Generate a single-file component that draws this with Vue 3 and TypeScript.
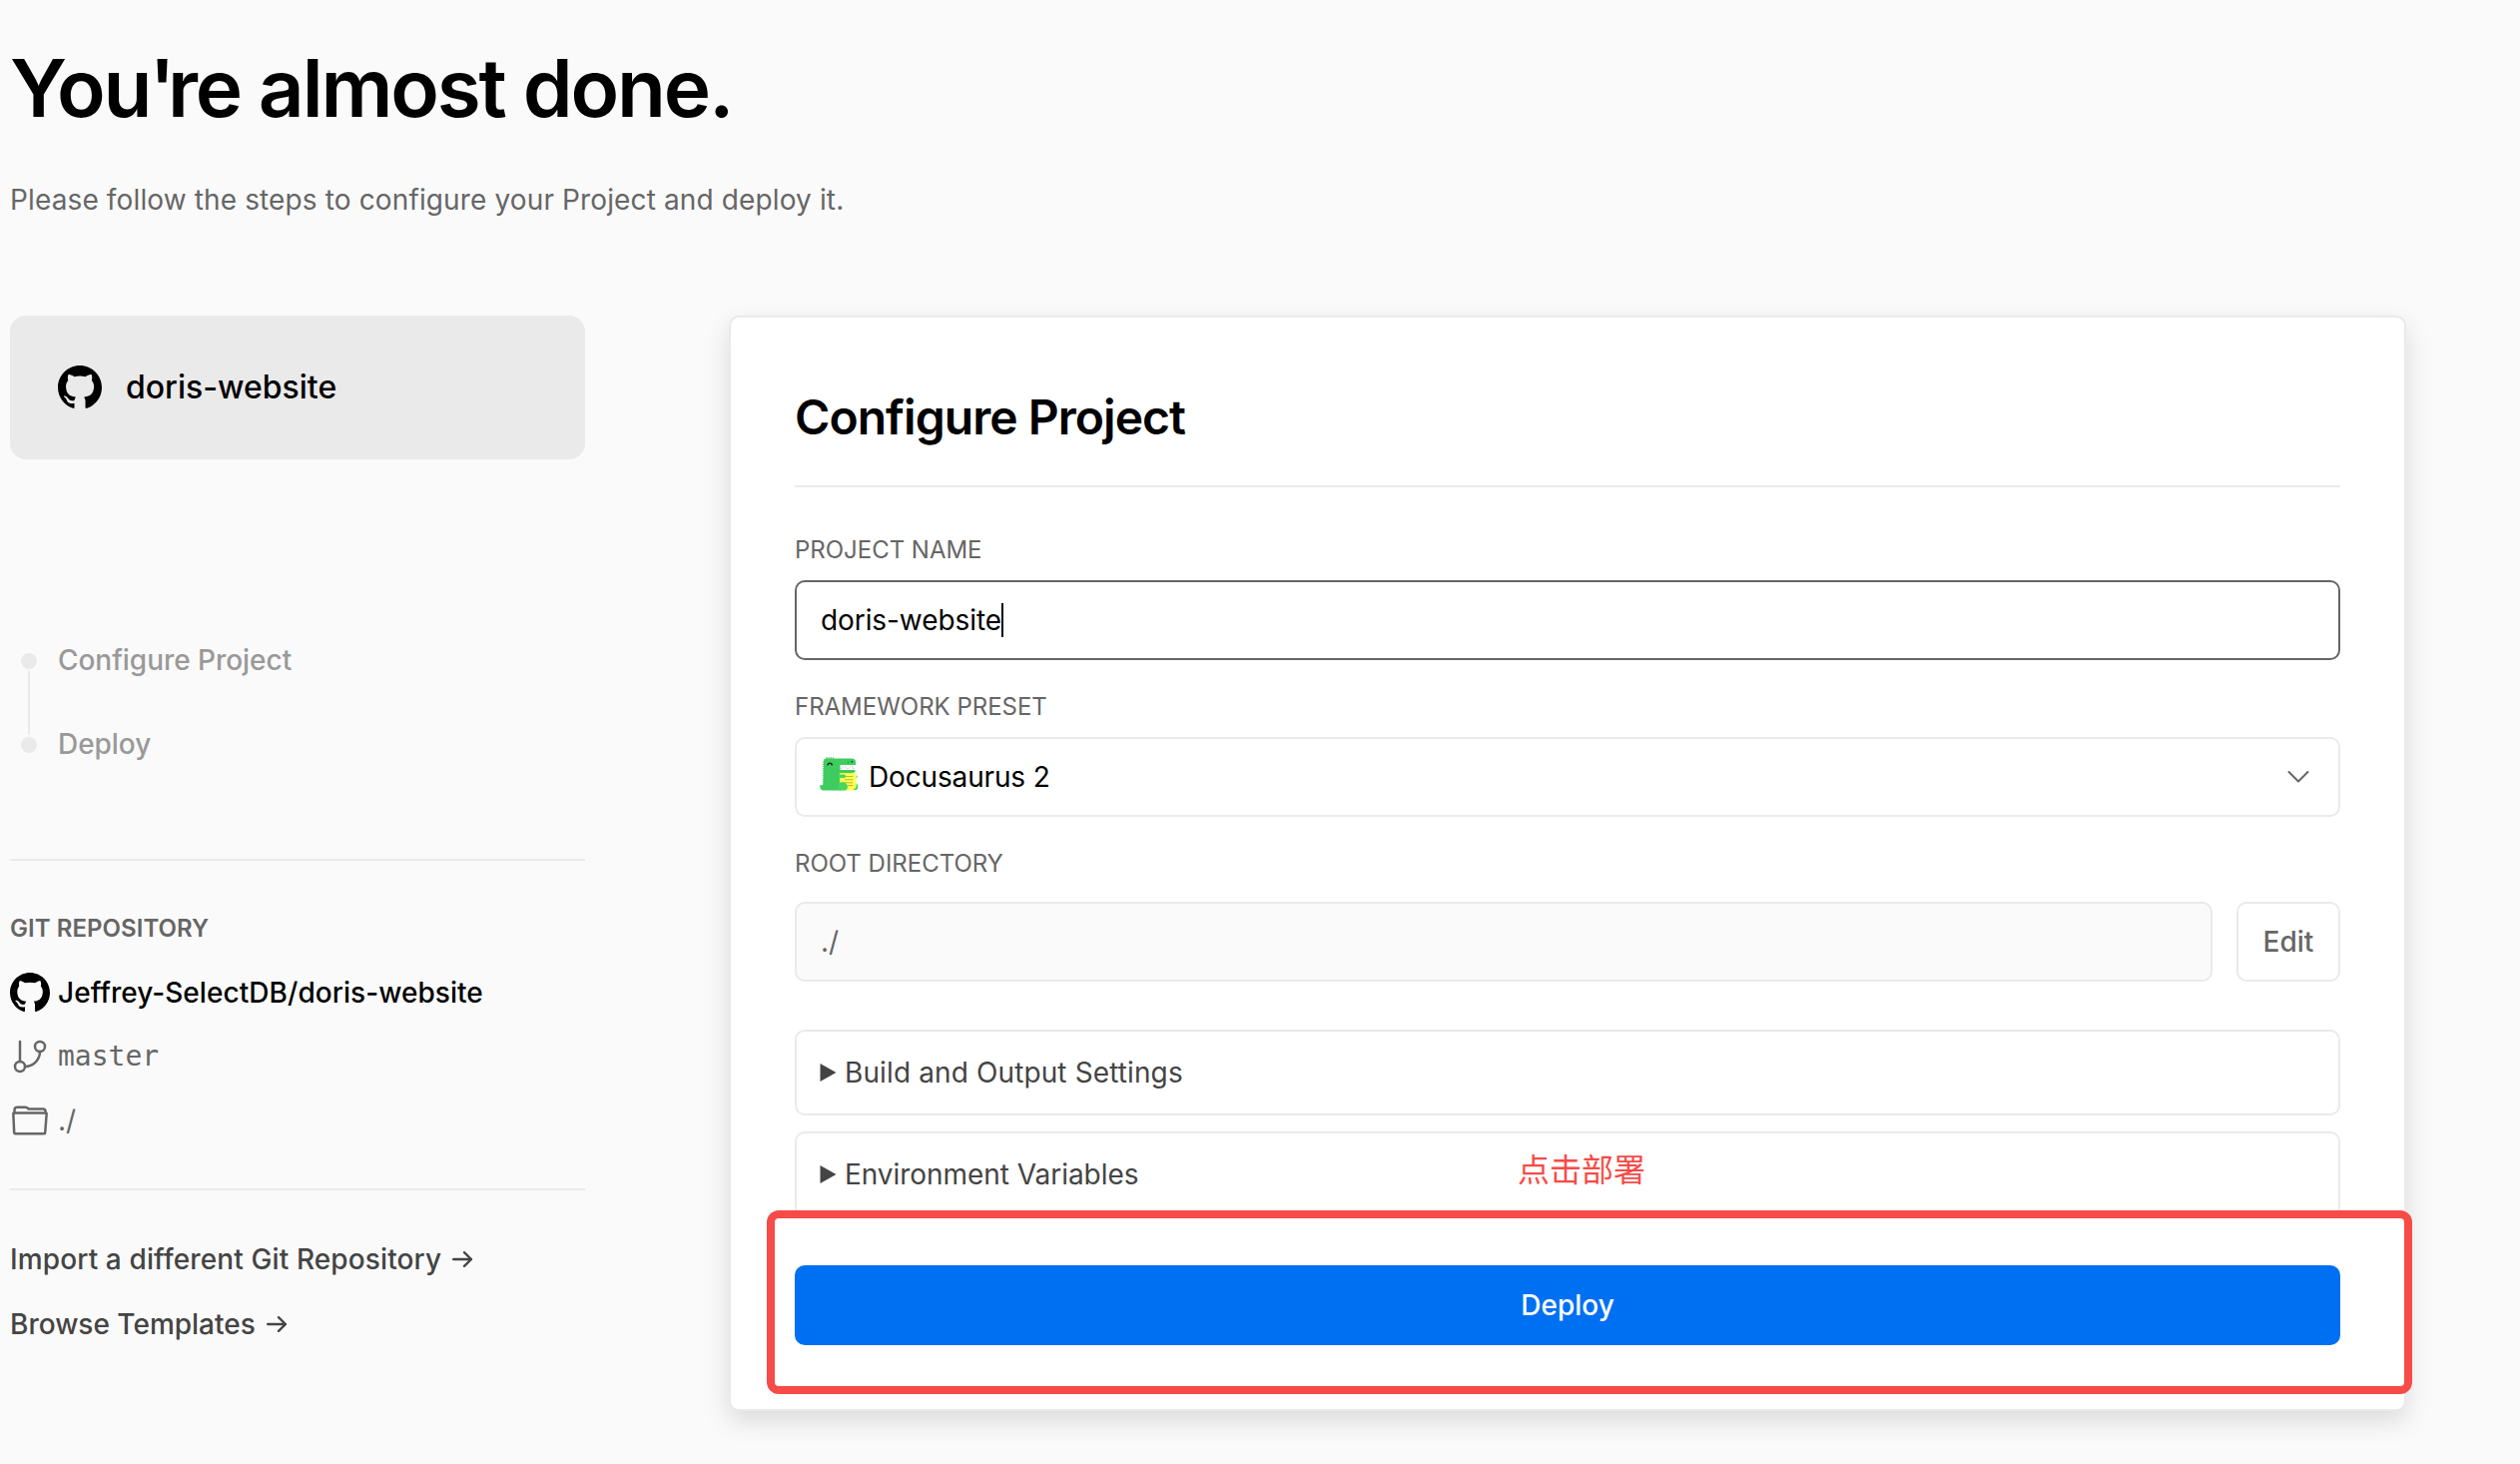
<script setup lang="ts">
import { ref } from 'vue'

const steps = ['Configure Project', 'Deploy']
const links = ['Import a different Git Repository', 'Browse Templates']
const sections = ['Build and Output Settings', 'Environment Variables']
const projectName = ref('doris-website')

const githubPath =
  'M8 0C3.58 0 0 3.58 0 8c0 3.54 2.29 6.53 5.47 7.59.4.07.55-.17.55-.38 0-.19-.01-.82-.01-1.49-2.01.37-2.53-.49-2.69-.94-.09-.23-.48-.94-.82-1.13-.28-.15-.68-.52-.01-.53.63-.01 1.08.58 1.23.82.72 1.21 1.87.87 2.33.66.07-.52.28-.87.51-1.07-1.78-.2-3.64-.89-3.64-3.95 0-.87.31-1.59.82-2.15-.08-.2-.36-1.02.08-2.12 0 0 .67-.21 2.2.82.64-.18 1.32-.27 2-.27s1.36.09 2 .27c1.53-1.04 2.2-.82 2.2-.82.44 1.1.16 1.92.08 2.12.51.56.82 1.27.82 2.15 0 3.07-1.87 3.75-3.65 3.95.29.25.54.73.54 1.48 0 1.07-.01 1.93-.01 2.2 0 .21.15.46.55.38A8.01 8.01 0 0 0 16 8c0-4.42-3.58-8-8-8z'
</script>

<template>
  <div class="page">
    <header class="intro">
      <h1>You<span class="apostrophe">'</span>re almost done.</h1>
      <p>Please follow the steps to configure your Project and deploy it.</p>
    </header>

    <div class="columns">
      <aside class="sidebar">
        <div class="repo-card">
          <svg width="44" height="44" viewBox="0 0 16 16"><path :d="githubPath" /></svg>
          <span>doris-website</span>
        </div>

        <ul class="steps">
          <li v-for="step in steps" :key="step"><i class="dot"></i><span>{{ step }}</span></li>
        </ul>

        <section class="repository">
          <h4>Git Repository</h4>
          <div class="meta strong">
            <svg width="40" height="40" viewBox="0 0 16 16"><path :d="githubPath" /></svg>
            <span>Jeffrey-SelectDB/doris-website</span>
          </div>
          <div class="meta">
            <svg class="line-icon" width="40" height="40" viewBox="0 0 24 24">
              <path d="M6 3v12" />
              <circle cx="18" cy="6" r="3" />
              <circle cx="6" cy="18" r="3" />
              <path d="M18 9a9 9 0 0 1-9 9" />
            </svg>
            <span class="mono">master</span>
          </div>
          <div class="meta">
            <svg class="line-icon" width="40" height="40" viewBox="0 0 24 24">
              <path d="M2.707 7.454V5.62C2.707 4.725 3.469 4 4.409 4h4.843c.451 0 .884.17 1.204.474l.49.467c.126.12.296.186.473.186h8.399c.94 0 1.55.695 1.55 1.59v.737m-18.661 0h-.354a.344.344 0 0 0-.353.35l.508 11.587c.015.34.31.609.668.609h17.283c.358 0 .652-.269.667-.61L22 7.805a.344.344 0 0 0-.353-.35h-.278m-18.662 0h18.662" />
            </svg>
            <span>./</span>
          </div>
        </section>

        <nav class="links">
          <a v-for="link in links" :key="link">
            <span>{{ link }}</span>
            <svg width="22" height="18" viewBox="0 0 22 18"><path d="M2.2 9H20M13 2.2 20 9l-7 6.8" /></svg>
          </a>
        </nav>
      </aside>

      <main class="card">
        <h2>Configure Project</h2>

        <label class="label first">Project Name</label>
        <div class="field focused"><span>{{ projectName }}</span><i class="caret"></i></div>

        <label class="label">Framework Preset</label>
        <div class="field select">
          <svg class="docusaurus" width="40" height="36" viewBox="0 0 40 36">
            <path d="M4 4Q4 1.6 6.5 1.6H32Q36 1.8 36 5V8H21V33.6H4Q.3 33 .3 30V28Q3.5 29 3.5 27Z" fill="#3ecc5f" />
            <path d="M4 4.5V28" fill="none" stroke="#3ecc5f" stroke-width="1.6" stroke-dasharray="1.2 1" />
            <path d="M6.5 1.1H14" fill="none" stroke="#3ecc5f" stroke-width="1.6" stroke-dasharray="1.2 1" />
            <path d="M20.5 8H36V13H20.5Z" fill="#fff" />
            <path d="M21.5 11.8 24 9.3M25.5 9.5 27.5 11.8M29 11.5 31 9.5M32.5 9.5 34 11.8" fill="none" stroke="#8b8b8b" stroke-width=".8" stroke-dasharray="1 .8" />
            <path d="M19 13H35.5V14.6Q35.5 16 33 16H19Z" fill="#3ecc5f" />
            <path d="M20 16H34.5L36.5 18V31Q36.5 33.6 34 33.6H20Z" fill="#ffff50" />
            <path d="M25 19.6H33.3M25 22.8H33.3M21.5 25.8H33.3M28 28.6H33.3" fill="none" stroke="#b5b53b" stroke-width="1" />
            <path d="M19 17.5H25Q27.4 19.3 25 21H19Z" fill="#44d860" />
            <path d="M19 25.5H25.5Q28.5 28 28 30.5 27.5 33.6 24 33.6H19Z" fill="#44d860" />
            <path d="M36.6 18.2Q39 19.3 36.6 21.4ZM36.6 26.5Q40 29 37 33H33.5Q36.6 31.5 36.6 29Z" fill="#44d860" />
            <path d="M8 8.5Q8.3 6.2 10.2 6.2T12.4 8.5" fill="none" stroke="#0b1d10" stroke-width="1.3" />
            <circle cx="32.3" cy="4.7" r=".8" fill="#0b1d10" />
            <circle cx="28.4" cy="5.3" r=".6" fill="#1d6b30" />
          </svg>
          <span class="preset">Docusaurus 2</span>
          <svg class="chevron" width="24" height="16" viewBox="0 0 24 16"><path d="M2.5 3 12 12.5 21.5 3" /></svg>
        </div>

        <label class="label">Root Directory</label>
        <div class="root-row">
          <div class="field disabled">./</div>
          <button class="edit">Edit</button>
        </div>

        <div class="accordions">
          <div v-for="section in sections" :key="section" class="accordion">
            <svg width="17" height="18" viewBox="0 0 17 18"><path d="M.5 0 16.5 9 .5 18Z" /></svg>
            <span>{{ section }}</span>
          </div>
        </div>

        <footer class="actions"><button class="deploy">Deploy</button></footer>

        <div class="highlight"></div>
        <div class="note">点击部署</div>
      </main>
    </div>
  </div>
</template>

<style>
body {
  background: #fafafa;
}
</style>

<style scoped>
* {
  box-sizing: border-box;
}

.page {
  height: 1466px;
  overflow: hidden;
  padding: 40px 114px 0 10px;
  background: #fafafa;
  color: #000;
  font-family: Inter, "Liberation Sans", sans-serif;
  font-size: 28px;
  line-height: 40px;
  white-space: nowrap;
}

.intro {
  height: 276px;
}

h1 {
  margin: 0;
  font-size: 80px;
  line-height: 96px;
  font-weight: 600;
  letter-spacing: -0.027em;
}

.apostrophe {
  margin-left: -1px;
  letter-spacing: -0.095em;
}

.intro p {
  margin: 44px 0 0;
  color: #666;
  letter-spacing: 0.13px;
}

.columns {
  display: flex;
  justify-content: space-between;
  align-items: flex-start;
}

.sidebar {
  width: 576px;
}

.repo-card {
  display: flex;
  align-items: center;
  gap: 24px;
  height: 144px;
  padding-left: 48px;
  border-radius: 16px;
  background: #eaeaea;
  font-size: 32px;
  font-weight: 500;
}

.steps {
  margin: 160px 0 72px;
  padding: 0;
  list-style: none;
}

.steps li {
  position: relative;
  display: flex;
  align-items: center;
  gap: 21px;
  height: 84px;
  padding-left: 11px;
  color: #999;
  font-weight: 500;
}

.steps li span {
  padding-bottom: 2px;
  letter-spacing: -0.04px;
}

.dot {
  width: 16px;
  height: 16px;
  border-radius: 50%;
  background: #eaeaea;
}

.steps li + li::before {
  content: "";
  position: absolute;
  left: 18px;
  top: -32px;
  width: 2px;
  height: 64px;
  background: #eaeaea;
}

.repository {
  padding: 56px 0 48px;
  border-top: 2px solid #eaeaea;
  border-bottom: 2px solid #eaeaea;
}

h4 {
  margin: 0 0 32px;
  color: #666;
  font-size: 24px;
  line-height: 24px;
  font-weight: 600;
  letter-spacing: 0.05px;
  text-transform: uppercase;
}

.meta {
  display: flex;
  align-items: center;
  gap: 8px;
  height: 40px;
  color: #666;
}

.meta + .meta {
  margin-top: 24px;
}

.meta.strong {
  color: #000;
  font-weight: 500;
  letter-spacing: 0.05px;
}

.mono {
  font-family: "DejaVu Sans Mono", monospace;
}

.line-icon {
  fill: none;
  stroke: #666;
  stroke-width: 1.5;
  stroke-linecap: round;
  stroke-linejoin: round;
}

.links {
  display: flex;
  flex-direction: column;
  gap: 25px;
  padding-top: 49px;
}

.links a {
  display: flex;
  align-items: center;
  gap: 10px;
  color: #444;
  font-weight: 500;
}

.links a:first-child {
  letter-spacing: 0.12px;
}

.links path {
  fill: none;
  stroke: #444;
  stroke-width: 2.4;
  stroke-linecap: round;
  stroke-linejoin: round;
}

.card {
  position: relative;
  width: 1680px;
  height: 1097px;
  padding: 0 64px;
  border: 2px solid #eaeaea;
  border-radius: 10px;
  background: #fff;
  box-shadow: 0 10px 26px rgba(0, 0, 0, 0.13);
}

h2 {
  margin: 0;
  padding: 70px 0 38px;
  border-bottom: 2px solid #eaeaea;
  font-size: 48px;
  line-height: 60px;
  font-weight: 600;
  letter-spacing: -0.02em;
}

.label {
  display: block;
  margin: 35px 0 18px;
  color: #666;
  font-size: 24px;
  line-height: 24px;
  letter-spacing: -0.02px;
  text-transform: uppercase;
}

.label.first {
  margin-top: 51px;
}

.field {
  display: flex;
  align-items: center;
  height: 80px;
  padding: 0 24px;
  border: 2px solid #eaeaea;
  border-radius: 10px;
}

.field.focused {
  border-color: #666;
  letter-spacing: -0.08px;
}

.caret {
  width: 2px;
  height: 34px;
  background: #000;
}

.docusaurus {
  margin: 0 9px 4px -1px;
}

.preset {
  letter-spacing: -0.15px;
}

.chevron {
  margin: 0 4px 0 auto;
  fill: none;
  stroke: #666;
  stroke-width: 2;
  stroke-linecap: round;
  stroke-linejoin: round;
}

.root-row {
  display: flex;
  gap: 24px;
  margin-top: 26px;
}

.field.disabled {
  flex: 1;
  background: #fafafa;
  color: #666;
}

button {
  padding: 0;
  border-radius: 10px;
  font: inherit;
  font-weight: 500;
}

.edit {
  width: 104px;
  height: 80px;
  border: 2px solid #eaeaea;
  background: #fff;
  color: #666;
}

.accordions {
  display: flex;
  flex-direction: column;
  gap: 16px;
  margin-top: 48px;
}

.accordion {
  display: flex;
  align-items: center;
  gap: 8px;
  height: 86px;
  padding-left: 23px;
  border: 2px solid #eaeaea;
  border-radius: 10px;
  color: #444;
}

.accordion:first-child {
  letter-spacing: 0.12px;
}

.accordion:last-child {
  letter-spacing: -0.05px;
}

.accordion path {
  fill: #444;
}

.actions {
  position: relative;
  margin-top: -7px;
  padding-top: 55px;
  background: #fff;
}

.deploy {
  display: block;
  width: 100%;
  height: 80px;
  border: 0;
  background: #0070f3;
  color: #fff;
}

.highlight {
  position: absolute;
  left: 36px;
  top: 894px;
  width: 1648px;
  height: 184px;
  border: 8px solid #f74b47;
  border-radius: 12px;
}

.note {
  position: absolute;
  left: 788px;
  top: 831px;
  color: #f74b47;
  font-family: "Noto Sans CJK SC", sans-serif;
  font-size: 32px;
  line-height: 40px;
}
</style>
